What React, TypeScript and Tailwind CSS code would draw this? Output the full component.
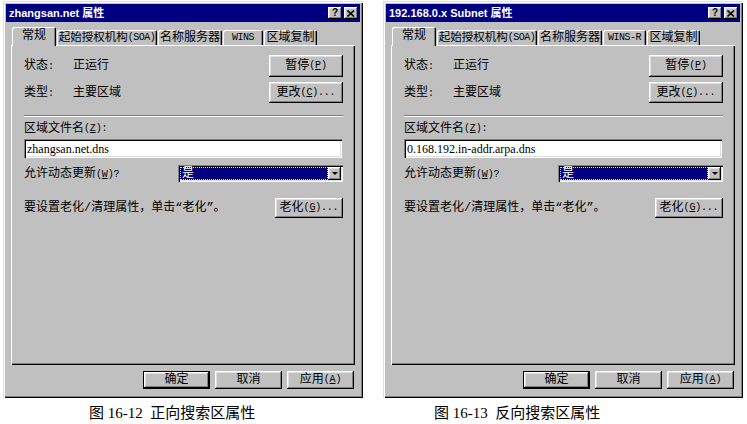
import React from "react";

const raised =
  "shadow-[inset_-1px_-1px_0_#000,inset_1px_1px_0_#fff,inset_-2px_-2px_0_#808080,inset_2px_2px_0_#dfdfdf]";
const sunken =
  "shadow-[inset_1px_1px_0_#808080,inset_2px_2px_0_#000,inset_-1px_-1px_0_#fff,inset_-2px_-2px_0_#dfdfdf]";

const UI = "font-['Liberation_Mono','Noto_Sans_CJK_SC',monospace]";

function K({ c, after }: { c: string; after?: string }) {
  return (
    <span className="text-[10px] tracking-[-0.2px]">
      (<span className="underline underline-offset-[1px]">{c}</span>){after ?? ""}
    </span>
  );
}

function Btn({
  children,
  w,
  h,
  def,
}: {
  children: React.ReactNode;
  w: string;
  h: string;
  def?: boolean;
}) {
  if (def) {
    return (
      <div className={`${w} ${h} border border-black flex`}>
        <div
          className={`flex-1 bg-[#c0c0c0] ${raised} flex items-center justify-center text-[12px] leading-none text-black`}
        >
          {children}
        </div>
      </div>
    );
  }
  return (
    <div
      className={`${w} ${h} bg-[#c0c0c0] ${raised} flex items-center justify-center text-[12px] leading-none text-black`}
    >
      {children}
    </div>
  );
}

function Tab({
  children,
  w,
  sel,
}: {
  children: React.ReactNode;
  w: string;
  sel?: boolean;
}) {
  if (sel) {
    return (
      <div
        className={`${w} h-[19px] translate-y-[1px] relative z-10 bg-[#c0c0c0] rounded-tl-[2px] rounded-tr-[2px] shadow-[inset_1px_1px_0_#fff,inset_-1px_0_0_#000,inset_-2px_0_0_#808080] flex items-center justify-center text-[12px] leading-none pb-[2px]`}
      >
        {children}
      </div>
    );
  }
  return (
    <div
      className={`${w} h-[15px] bg-[#c0c0c0] rounded-tl-[2px] rounded-tr-[2px] shadow-[inset_1px_1px_0_#fff,inset_-1px_0_0_#000,inset_-2px_0_0_#808080] flex items-center justify-center text-[12px] leading-none whitespace-nowrap overflow-hidden pt-[1px]`}
    >
      {children}
    </div>
  );
}

function Dialog({
  title,
  file,
  tab4,
  tab4w,
}: {
  title: string;
  file: string;
  tab4: string;
  tab4w: string;
}) {
  return (
    <div
      className={`w-[360px] h-[397px] bg-[#c0c0c0] p-[3px] flex flex-col shadow-[inset_1px_1px_0_#dfdfdf,inset_2px_2px_0_#fff,inset_-1px_-1px_0_#000,inset_-2px_-2px_0_#808080] ${UI} text-black`}
    >
      {/* title bar */}
      <div className="h-[18px] bg-[#000080] flex items-center pl-[3px] pr-[2px]">
        <span className="text-white font-bold text-[11px] leading-none font-['Liberation_Sans','Noto_Sans_CJK_SC',sans-serif]">
          {title}
        </span>
        <div className="ml-auto flex gap-[2px]">
          <div
            className={`w-[14px] h-[12px] bg-[#c0c0c0] ${raised} flex items-center justify-center text-[10px] font-bold leading-none font-['Liberation_Sans',sans-serif]`}
          >
            ?
          </div>
          <div
            className={`w-[14px] h-[12px] bg-[#c0c0c0] ${raised} flex items-center justify-center`}
          >
            <svg width="8" height="7" viewBox="0 0 8 7">
              <path d="M0.5 0.5 L7 6.5 M7 0.5 L0.5 6.5" stroke="#000" strokeWidth="1.6" />
            </svg>
          </div>
        </div>
      </div>

      {/* tabs */}
      <div className="mt-[5px] h-[18px] flex items-end pl-[6px] gap-[1px]">
        <Tab w="w-[44px]" sel>
          常规
        </Tab>
        <Tab w="w-[100px]">
          <span className="text-[11.5px]">起始授权机构</span>
          <span className="text-[10px] tracking-[-0.5px]">(SOA)</span>
        </Tab>
        <Tab w="w-[64px]">名称服务器</Tab>
        <Tab w={tab4w}>
          <span className="text-[10px] tracking-[-0.5px]">{tab4}</span>
        </Tab>
        <Tab w="w-[53px]">区域复制</Tab>
      </div>

      {/* panel */}
      <div className="mx-[5px] h-[320px] shadow-[inset_1px_1px_0_#fff,inset_-1px_-1px_0_#000,inset_-2px_-2px_0_#808080] pl-[13px] pr-[12px] pt-[10px] flex flex-col text-[12px] leading-none">
        <div className="h-[22px] flex items-center">
          <span className="w-[49px]">
            状态<span className="text-[10px]">:</span>
          </span>
          <span>正运行</span>
          <div className="ml-auto">
            <Btn w="w-[74px]" h="h-[22px]">
              暂停<K c="P" />
            </Btn>
          </div>
        </div>
        <div className="mt-[5px] h-[21px] flex items-center">
          <span className="w-[49px]">
            类型<span className="text-[10px]">:</span>
          </span>
          <span>主要区域</span>
          <div className="ml-auto">
            <Btn w="w-[74px]" h="h-[21px]">
              更改<K c="C" after="..." />
            </Btn>
          </div>
        </div>
        <div className="mt-[12px] h-[2px] border-t border-[#808080] border-b border-b-white" />
        <div className="mt-[6px] h-[12px] flex items-center">
          区域文件名<K c="Z" after=":" />
        </div>
        <div
          className={`mt-[4px] h-[19px] mr-[1px] bg-white ${sunken} flex items-center pl-[3px] text-[12px] font-['Liberation_Serif',serif]`}
        >
          {file}
        </div>
        <div className="mt-[7px] h-[17px] flex items-center">
          <span>
            允许动态更新<K c="W" after="?" />
          </span>
          <div className={`ml-auto w-[165px] h-[17px] bg-white ${sunken} p-[2px] flex`}>
            <div className="flex-1 bg-[#000080] border border-dotted border-[#e8e870] flex items-center pl-[1px] text-white text-[12px] leading-none">
              是
            </div>
            <div className={`w-[13px] bg-[#c0c0c0] ${raised} flex items-center justify-center`}>
              <div className="w-0 h-0 border-l-[3px] border-r-[3px] border-t-[3px] border-l-transparent border-r-transparent border-t-black" />
            </div>
          </div>
        </div>
        <div className="mt-[16px] h-[20px] flex items-center">
          <span>要设置老化/清理属性，单击“老化”。</span>
          <div className="ml-auto">
            <Btn w="w-[68px]" h="h-[20px]">
              老化<K c="G" after="..." />
            </Btn>
          </div>
        </div>
      </div>

      {/* bottom buttons */}
      <div className="mt-[6px] flex justify-end gap-[5px] pr-[6px]">
        <Btn w="w-[67px]" h="h-[18px]" def>
          确定
        </Btn>
        <Btn w="w-[67px]" h="h-[18px]">
          取消
        </Btn>
        <Btn w="w-[67px]" h="h-[18px]">
          应用<K c="A" />
        </Btn>
      </div>
    </div>
  );
}

export default function App() {
  return (
    <div className="w-[747px] h-[424px] bg-white flex pl-[3px] pt-[1px] gap-[20px] overflow-hidden">
      <div className="flex flex-col">
        <Dialog
          title="zhangsan.net 属性"
          file="zhangsan.net.dns"
          tab4="WINS"
          tab4w="w-[40px]"
        />
        <div className="mt-[5px] pl-[86px] leading-[20px] text-[15px] text-black font-['Liberation_Serif','Noto_Sans_CJK_SC',serif] whitespace-nowrap">
          图 16-12&nbsp; 正向搜索区属性
        </div>
      </div>
      <div className="flex flex-col">
        <Dialog
          title="192.168.0.x Subnet 属性"
          file="0.168.192.in-addr.arpa.dns"
          tab4="WINS-R"
          tab4w="w-[43px]"
        />
        <div className="mt-[5px] pl-[51px] leading-[20px] text-[15px] text-black font-['Liberation_Serif','Noto_Sans_CJK_SC',serif] whitespace-nowrap">
          图 16-13&nbsp; 反向搜索区属性
        </div>
      </div>
    </div>
  );
}
